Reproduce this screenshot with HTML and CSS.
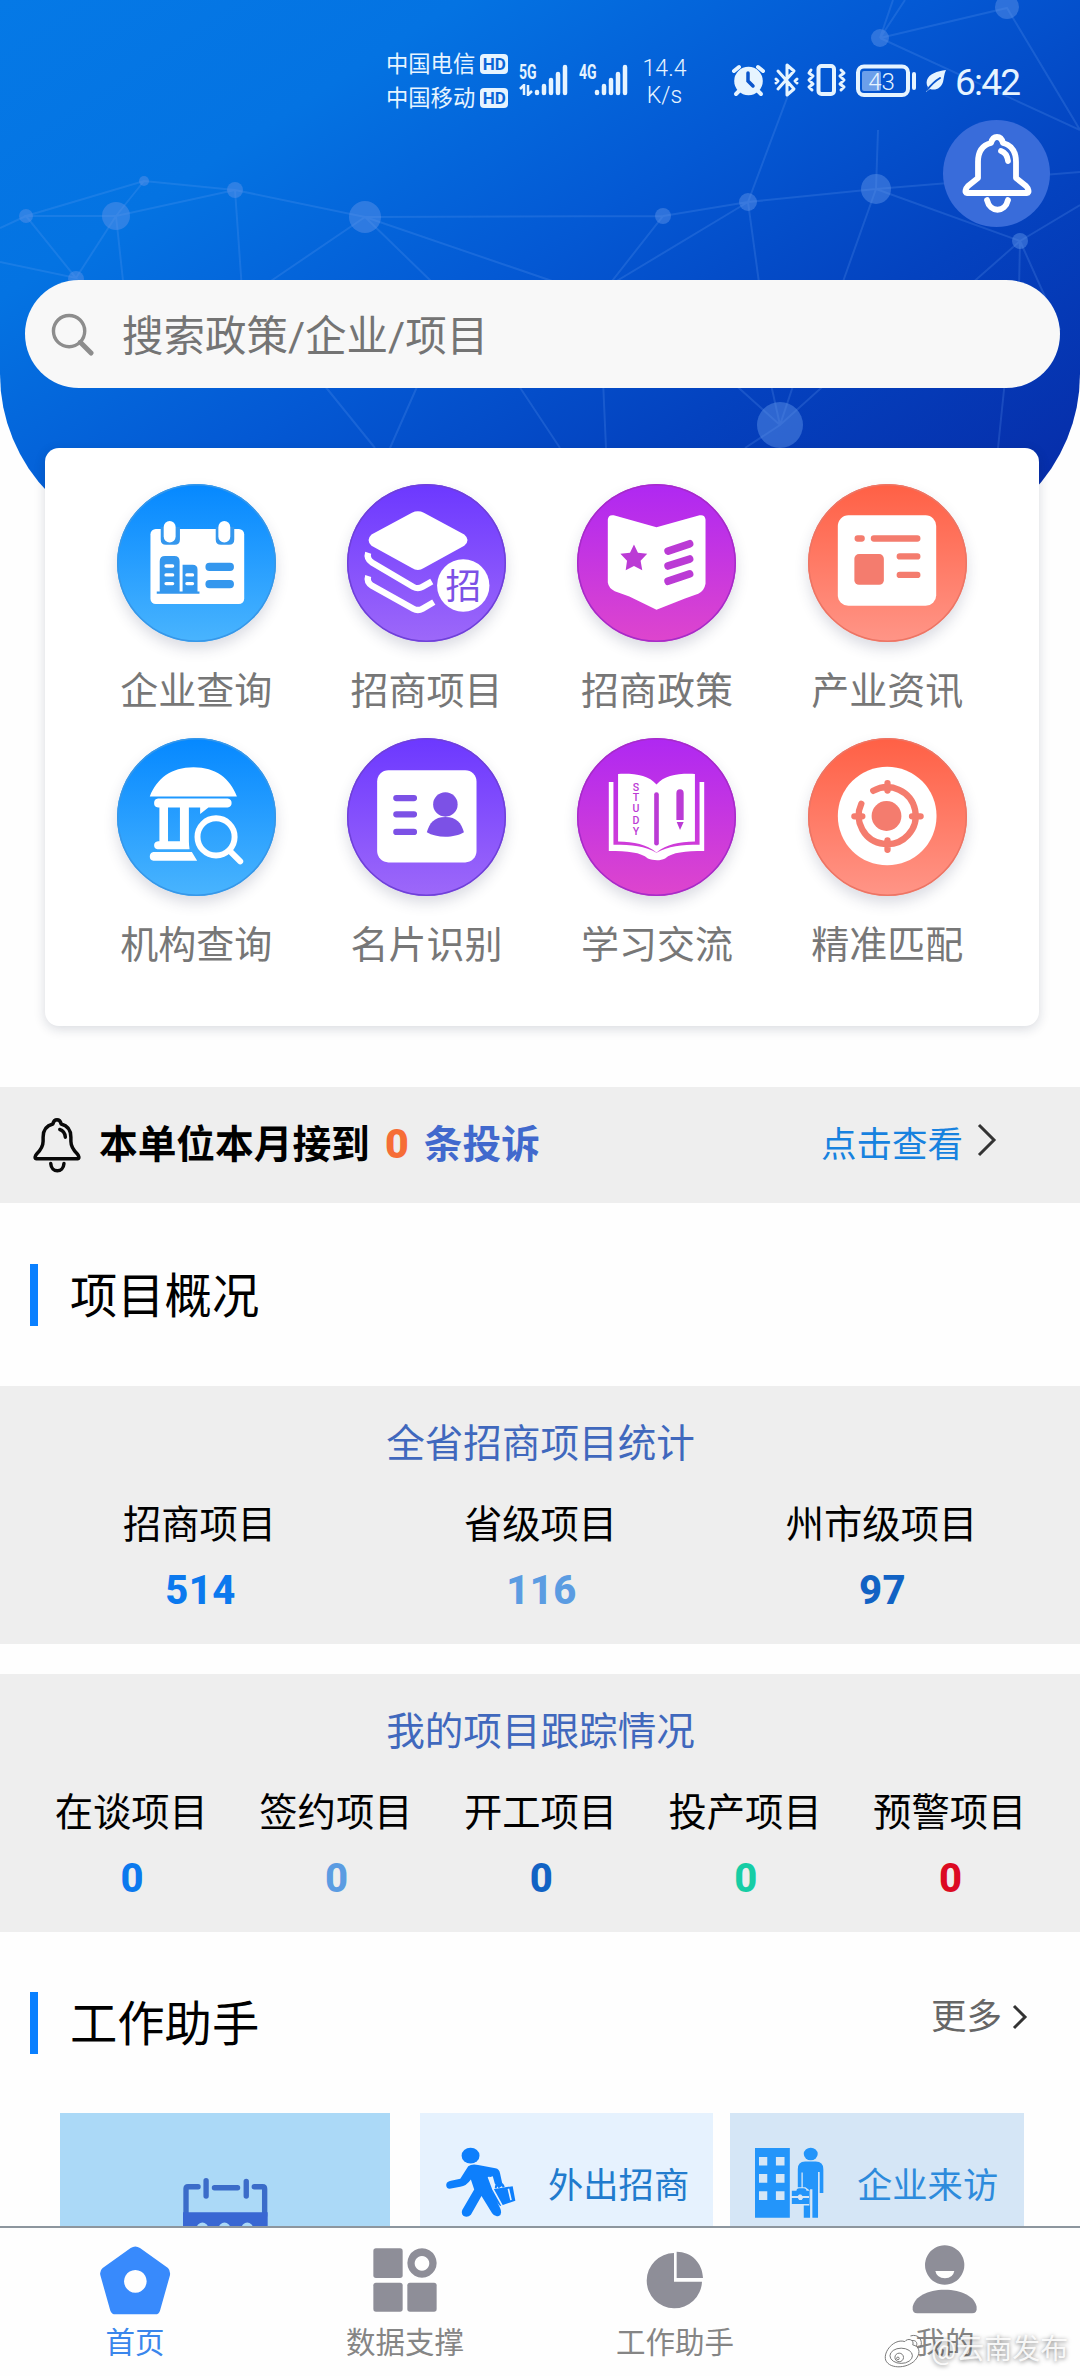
FILE: index.html
```html
<!DOCTYPE html>
<html lang="zh-CN">
<head>
<meta charset="utf-8">
<title>首页</title>
<link rel="stylesheet" href="styles.css">
</head>
<body>
<div class="app">
  <main class="content">
    <header class="hero">
      <svg class="mesh" viewBox="0 0 1080 540" aria-hidden="true">
        <g class="mesh-lines">
          <path d="M0 228 26 216 144 181 235 190 116 216 26 216 76 278 0 262M116 216 76 278M116 216 144 181M116 216 124 290M235 190 242 290M235 190 365 217 663 216 605 290M365 217 265 285M365 217 435 285M365 217 555 282M663 216 748 202 876 189 1080 172M748 202 610 285M748 202 760 290M748 202 790 90M876 189 840 290M876 189 1020 241 1080 205M876 189 878 130M1020 241 970 285M1020 241 1060 330M880 38 1007 8 1080 130M880 38 1080 130M880 38 905 0M880 38 893 0M1020 241 1019 290M320 380 375 448M420 380 390 448M515 380 560 448M603 380 606 448M730 380 780 425 830 380M780 425 770 380M780 425 795 380M780 425 745 448M1005 380 998 448"/>
        </g>
        <g class="mesh-dots">
          <circle cx="26" cy="216" r="7"/><circle cx="116" cy="216" r="14"/><circle cx="144" cy="181" r="5"/>
          <circle cx="235" cy="190" r="8"/><circle cx="365" cy="217" r="16"/><circle cx="76" cy="279" r="8"/>
          <circle cx="663" cy="216" r="8"/><circle cx="748" cy="202" r="9"/><circle cx="876" cy="189" r="15"/>
          <circle cx="880" cy="38" r="9"/><circle cx="1007" cy="7" r="12"/><circle cx="1020" cy="241" r="8"/>
          <circle cx="780" cy="425" r="23"/>
        </g>
      </svg>

      <div class="status">
        <div class="carriers">
          <div class="carrier">中国电信<span class="hd">HD</span></div>
          <div class="carrier">中国移动<span class="hd">HD</span></div>
        </div>
        <div class="signal">
          <span class="gen">5G</span>
          <svg class="updown" viewBox="0 0 14 12"><path d="M5 11V1L1 5M9 1v10l4-4"/></svg>
          <svg class="bars" viewBox="0 0 34 32"><path d="M3 28v1M10 22v7M17 16v13M24 10v19M31 3v26"/></svg>
        </div>
        <div class="signal signal-b">
          <span class="gen">4G</span>
          <svg class="bars" viewBox="0 0 34 32"><path d="M3 28v1M10 22v7M17 16v13M24 10v19M31 3v26"/></svg>
        </div>
        <div class="speed"><span>14.4</span><span>K/s</span></div>
        <svg class="tray" viewBox="730 60 220 40">
          <g class="fill">
            <circle cx="748.500" cy="81" r="14.300"/>
            <path d="M739 91l-3 3M758 91l3 3" class="line"/>
            <path d="M734 71l5-4M763 71l-5-4" class="line"/>
            <path d="M748 73v8l5 5" class="cut"/>
          </g>
          <path class="line thin" d="M778 71l16 18-7 6V65l7 6-16 18M776 79l2 2-2 2M797 79l-2 2 2 2"/>
          <rect class="line" x="818.500" y="66" width="15.500" height="28" rx="3"/>
          <path class="line thin" d="M811 70l-2 3 4 3-4 4 4 4-4 3 3 3M841 70l3 3-4 3 4 4-4 4 4 3-3 3"/>
          <rect class="charge" x="862" y="71" width="19" height="20" rx="2"/>
          <rect class="line" x="858" y="66.500" width="50" height="28.500" rx="6"/>
          <path class="line" d="M914 74v14"/>
          <text x="881.500" y="90" text-anchor="middle" class="battery">43</text>
          <path class="leaf" d="M946 70c-9 1-17 4-19 10-1 3 0 6 1 7l-2 5 4-3c6 2 11-1 13-7 1-4 1-8 3-12z"/>
          <path class="cut fine" d="M927 90c4-5 8-9 13-12"/>
        </svg>
        <span class="clock">6:42</span>
      </div>

      <button class="bell-btn" aria-label="消息">
        <svg class="bell" viewBox="960 133 72 82">
          <path d="M966 193H1026C1029 193 1027 188 1025 186L1015 178V162C1015 151 1010 145 1002 143 1001 139 999 137 996 137S991 139 990 143C982 145 977 151 977 162V178L967 186C965 188 963 193 966 193ZM986 200C989 213 1004 213 1007 200M1000 151Q1006 153 1007 161"/>
        </svg>
      </button>

      <div class="search">
        <svg class="search-icon" viewBox="0 0 44 44"><circle cx="18.500" cy="18.500" r="16"/><path d="M30 30l11 11" class="handle"/></svg>
        <span>搜索政策/企业/项目</span>
      </div>
    </header>

    <section class="menu">
      <a class="entry">
        <span class="badge blue"><svg viewBox="108 72 480 474">
          <rect class="w" x="209" y="206" width="283" height="227" rx="16"/>
          <path class="c" d="M240 200h58v38q0 16-16 16h-26q-16 0-16-16zM406 200h56v38q0 16-16 16h-24q-16 0-16-16z"/>
          <rect class="w" x="249" y="182" width="36" height="65" rx="18"/><rect class="w" x="414" y="182" width="36" height="65" rx="18"/>
          <path class="c" d="M237 396v-92q0-16 16-16h28q16 0 16 16v92zM306 396v-82h30q15 0 15 14v68zM228 395h129v7H228z"/>
          <rect class="c" x="375" y="308" width="86" height="25" rx="12"/><rect class="c" x="375" y="360" width="86" height="25" rx="12"/>
          <path class="ws" d="M256 318h20M256 345h20M256 371h20M319 345h17M319 371h17"/>
        </svg></span>
        <span class="label">企业查询</span>
      </a>
      <a class="entry">
        <span class="badge violet"><svg viewBox="800 72 480 474">
          <path class="w" d="M996 157q18-8 36 0l122 66q20 17 0 34l-122 67q-18 12-36 0l-122-67q-18-17 0-34z"/>
          <path class="wl" d="M864 278q-6 18 12 30l124 73q14 8 28 0l28-16M864 348q-6 18 12 30l124 69q14 8 28 0l34-20"/>
          <circle class="w" cx="1151" cy="377" r="79"/>
          <text class="zhao" x="1151" y="417" text-anchor="middle">招</text>
        </svg></span>
        <span class="label">招商项目</span>
      </a>
      <a class="entry">
        <span class="badge magenta"><svg viewBox="111 72 480 474">
          <path class="w" d="M204 178q2-16 18-13l129 36 130-36q16-3 18 13v194q-4 22-22 30l-40 14-86 34-82-40-44-16q-18-8-21-26z"/>
          <path class="c" d="M283 253l12 25 28 3-20 21 5 29-25-13-25 13 4-29-20-21 29-3z"/>
          <path class="cl bold" d="M386 273l65-22M386 318l65-21M386 364l65-22"/>
        </svg></span>
        <span class="label">招商政策</span>
      </a>
      <a class="entry">
        <span class="badge coral"><svg viewBox="803 72 480 474">
          <rect class="w" x="893" y="165" width="297" height="273" rx="32"/>
          <rect class="c" x="943" y="282" width="89" height="93" rx="14"/>
          <path class="cl" d="M953 235h12M1002 235h131M1080 289h53M1080 345h53"/>
        </svg></span>
        <span class="label">产业资讯</span>
      </a>
      <a class="entry">
        <span class="badge blue"><svg viewBox="108 53 480 474">
          <path class="w" d="M207 228c22-54 64-88 132-88s110 34 131 88zM232 234h210q12 2 12 14t-12 13H384l-25 20V261H325v102q0 8 2 24H230q-10-2-10-12t12-12h4V261h-4q-12 0-12-13t12-14zM262 261v102h36V261zM218 396h116l16 26H218q-11-2-11-13t11-13z" fill-rule="evenodd"/>
          <circle class="lens" cx="407" cy="350" r="56"/><path class="lens" d="M449 393l31 31"/>
        </svg></span>
        <span class="label">机构查询</span>
      </a>
      <a class="entry">
        <span class="badge violet"><svg viewBox="800 53 480 474">
          <rect class="w" x="891" y="149" width="300" height="278" rx="34"/>
          <path class="cl" d="M949 233h53M949 282h53M949 335h53"/>
          <circle class="c" cx="1097" cy="252" r="37"/>
          <path class="c" d="M1041 336c8-28 22-46 56-46s48 18 56 46c-28 18-84 18-112 0z"/>
        </svg></span>
        <span class="label">名片识别</span>
      </a>
      <a class="entry">
        <span class="badge magenta"><svg viewBox="111 53 480 474">
          <path class="w" d="M207 184h14v190c56 0 96 4 130 24 36-20 74-24 130-24V184h14v209c-58 0-96 4-118 22-16 8-36 6-52 0-22-18-60-22-118-22z"/>
          <path class="w" d="M235 160c52-2 92 4 116 32 24-28 64-34 116-32v204c-50 2-84 8-116 33-32-25-66-31-116-33z"/>
          <path class="cl spine" d="M351 222v147"/>
          <path class="c" d="M411 299v-81q0-12 11-12t11 12v81zM412 305h21l-11 24z"/>
          <g class="study" text-anchor="middle"><text x="289" y="212">S</text><text x="289" y="243">T</text><text x="289" y="276">U</text><text x="289" y="310">D</text><text x="289" y="344">Y</text></g>
        </svg></span>
        <span class="label">学习交流</span>
      </a>
      <a class="entry">
        <span class="badge coral"><svg viewBox="803 53 480 474">
          <circle class="w" cx="1042" cy="287" r="149"/>
          <circle class="c" cx="1040" cy="287" r="45"/>
          <path class="cl" d="M1000 211A86 86 0 1 1 964 250M1043 188v22M1043 361v28M943 288h24M1117 288h26"/>
        </svg></span>
        <span class="label">精准匹配</span>
      </a>
    </section>

    <section class="notice">
      <svg class="bell dark" viewBox="960 133 72 82">
        <path d="M966 193H1026C1029 193 1027 188 1025 186 1018 179 1016 174 1016 168V162C1016 151 1010 145 1002 143 1001 139 999 137 996 137S991 139 990 143C982 145 976 151 976 162V168C976 174 974 179 967 186 965 188 963 193 966 193ZM987 200C988 214 1005 214 1006 200M1000 151Q1007 153 1008 162"/>
      </svg>
      <p class="notice-text">本单位本月接到<b class="count">0</b><span class="complaint">条投诉</span></p>
      <a class="notice-link">点击查看</a>
      <svg class="chevron" viewBox="0 0 20 34"><path d="M2 2l15 15L2 32"/></svg>
    </section>

    <div class="section-head"><h2>项目概况</h2></div>

    <section class="stats">
      <h3>全省招商项目统计</h3>
      <dl class="figures three">
        <div><dt>招商项目</dt><dd class="n-blue">514</dd></div>
        <div><dt>省级项目</dt><dd class="n-sky">116</dd></div>
        <div><dt>州市级项目</dt><dd class="n-navy">97</dd></div>
      </dl>
    </section>

    <section class="stats">
      <h3>我的项目跟踪情况</h3>
      <dl class="figures five">
        <div><dt>在谈项目</dt><dd class="n-blue">0</dd></div>
        <div><dt>签约项目</dt><dd class="n-sky">0</dd></div>
        <div><dt>开工项目</dt><dd class="n-navy">0</dd></div>
        <div><dt>投产项目</dt><dd class="n-teal">0</dd></div>
        <div><dt>预警项目</dt><dd class="n-red">0</dd></div>
      </dl>
    </section>

    <div class="section-head work">
      <h2>工作助手</h2>
      <a class="more">更多<svg class="chevron small" viewBox="0 0 16 26"><path d="M2 2l11 11L2 24"/></svg></a>
    </div>

    <section class="tools">
      <div class="tool calendar">
        <svg viewBox="429 264 254 254" class="cal-icon">
          <path class="cal-line" d="M474 290h-30q-6 0-6 6v80M642 290h25q6 0 6 6v80M523 293h69"/>
          <path class="cal-line" d="M498 272v46M618 274v44"/>
          <path class="cal-fill" d="M429 366h253v130q0 22-22 22H451q-22 0-22-22z"/>
          <g class="cal-dots"><circle cx="487" cy="414" r="17"/><circle cx="553" cy="414" r="17"/><circle cx="621" cy="414" r="17"/></g>
        </svg>
      </div>
      <div class="tool out">
        <svg viewBox="1217 172 211 211" class="out-icon">
          <ellipse cx="1291" cy="198" rx="27" ry="24"/>
          <path d="M1284 230q10-8 30-4l52 10q12 2 14 16l8 36-12 8-12-14-6-22-12 4 10 24 2 22 22 46q8 18-4 24-12 4-20-8l-32-52-32 56q-10 10-22 4-8-6-4-18l36-62-10-30q-14 20-32 22l-32 6q-12-2-10-14 2-8 14-10l28-6z"/>
          <path d="M1354 300l64-10 8 44-46 16-18-22zM1364 296q0-16 14-16 12-2 16 12l-6 2q-4-8-10-6-8 0-8 8z"/>
          <path class="out-cut" d="M1345 262l14 38 28 50M1405 298l8 34"/>
        </svg>
        <span>外出招商</span>
      </div>
      <div class="tool visit">
        <svg viewBox="585 172 208 212" class="visit-icon">
          <path fill-rule="evenodd" d="M585 174h105v210H585zM597 201v26h25v-26zM648 201v26h26v-26zM597 252v27h25v-27zM648 252v27h26v-27zM597 304v27h25v-27zM648 304v27h26v-27z"/>
          <ellipse cx="753" cy="192" rx="21" ry="19"/>
          <path d="M714 292v-54q0-23 22-23h32q23 0 23 23v72h-11v-64h-5v138h-17v-86h-7v86h-19v-37h17v-46l-12-9h-8v-44h-4v44z"/>
          <path d="M696 303h14q0-8 8-8h14q8 0 8 8h8v16h-20l-4-5h-6l-4 5h-18zM696 325h18l4 6h8l4-6h18v18h-52z"/>
        </svg>
        <span>企业来访</span>
      </div>
    </section>
  </main>

  <nav class="tabs">
    <a class="tab active">
      <svg viewBox="180 470 210 208"><path fill-rule="evenodd" d="M272 476q14-9 28 0l84 60q8 8 6 22l-30 106q-3 11-14 11H226q-11 0-15-11L181 558q-3-14 7-22zM286 542a34 34 0 1 0 .1 0z"/></svg>
      <span>首页</span>
    </a>
    <a class="tab">
      <svg viewBox="991 470 210 208"><rect x="1001" y="477" width="88" height="89" rx="8"/><rect x="1001" y="580" width="88" height="87" rx="8"/><rect x="1103" y="580" width="88" height="87" rx="8"/><path fill-rule="evenodd" d="M1147 477a44 44 0 1 0 .1 0zM1147 500a22 22 0 1 1-.1 0z"/></svg>
      <span>数据支撑</span>
    </a>
    <a class="tab">
      <svg viewBox="241 470 210 208"><path d="M343 491v86h84a83 83 0 1 1-84-86zM351 487c44 0 78 34 79 79h-79z"/></svg>
      <span>工作助手</span>
    </a>
    <a class="tab">
      <svg viewBox="1051 470 210 208"><path fill-rule="evenodd" d="M1155 468a59 59 0 1 0 .1 0zM1127 545h57q-4 21-28 22-25-1-29-22z"/><path d="M1059 652c6-30 44-51 96-51s90 21 96 51q2 20-14 20h-164q-16 0-14-20z"/></svg>
      <span>我的</span>
    </a>
  </nav>

  <div class="watermark">
    <svg viewBox="975 720 115 104">
      <path class="wm-body" d="M1035 745c8-12 30-6 24 10 20 4 24 22 12 40-20 32-82 36-94 6-8-26 26-66 58-56z"/>
      <ellipse cx="1024" cy="788" rx="34" ry="23"/><circle cx="1018" cy="793" r="13"/><circle cx="1014" cy="796" r="4"/>
      <path d="M1052 728c24-8 40 14 30 34M1056 742c12-2 18 6 14 16"/>
    </svg>
    <span>@云南发布</span>
  </div>
</div>
</body>
</html>
```

FILE: styles.css
```css
* { box-sizing: border-box; margin: 0; padding: 0; }
svg { display: block; flex: none; }

body {
  width: 1080px;
  background: #fefefe;
  font-family: Roboto, "Noto Sans CJK SC", sans-serif;
  color: #000;
}

.app {
  position: relative;
  display: flex;
  flex-direction: column;
  height: 2376px;
  overflow: hidden;
}

.content { flex: 1; min-height: 0; overflow: hidden; }

/* Header */
.hero {
  position: relative;
  height: 544px;
  padding-top: 43px;
  border-radius: 0 0 170px 170px;
  overflow: hidden;
  background: linear-gradient(147deg, #0579e6 0%, #0473e2 24%, #0459d4 48%, #0442bf 70%, #0728a4 100%);
}
.mesh { position: absolute; left: 0; top: 0; width: 1080px; height: 540px; }
.mesh-lines { fill: none; stroke: #6fa4f5; stroke-opacity: .2; stroke-width: 2; }
.mesh-dots { fill: #5b93e8; fill-opacity: .48; }

.status {
  position: relative;
  display: flex;
  height: 77px;
  padding-left: 386px;
  color: #e6f4ff;
}
.carriers { width: 133px; padding-top: 4px; }
.carrier { display: flex; align-items: center; height: 34px; font-size: 22.300px; line-height: 34px; white-space: nowrap; }
.hd {
  width: 28px; height: 20px; margin-left: 5px;
  border-radius: 4px; background: #e6f4ff;
  color: #0964d6; font-size: 17px; font-weight: 700; line-height: 20px; text-align: center;
}
.signal { position: relative; width: 60px; height: 60px; }
.signal-b { width: 63px; }
.gen { position: absolute; left: 0; top: 20px; font-size: 20px; font-weight: 700; line-height: 18px; transform: scaleX(.7); transform-origin: 0 0; }
.updown { position: absolute; left: 0; top: 41px; width: 14px; height: 12px; fill: none; stroke: currentColor; stroke-width: 2.500; }
.bars { position: absolute; left: 15px; top: 21px; width: 34px; height: 32px; fill: none; stroke: currentColor; stroke-width: 4.500; stroke-linecap: round; }
.speed { display: flex; flex-direction: column; align-items: center; width: 45px; padding-top: 12px; font-size: 23px; font-weight: 300; line-height: 27px; }
.tray { width: 220px; height: 40px; margin: 17px 0 0 43px; fill: none; }
.tray .fill circle, .leaf { fill: #e6f4ff; }
.tray .line { fill: none; stroke: #e6f4ff; stroke-width: 4; stroke-linecap: round; stroke-linejoin: round; }
.tray .thin { stroke-width: 3; }
.tray .cut { fill: none; stroke: #0b55cc; stroke-width: 3.500; stroke-linecap: round; }
.tray .fine { stroke-width: 2; }
.charge { fill: #6c9fea; }
.battery { fill: #e6f4ff; font-size: 24px; font-weight: 300; }
.clock { margin: 20px 0 0 5px; font-size: 37px; line-height: 40px; letter-spacing: -1.800px; }

.bell-btn {
  position: relative;
  display: flex; align-items: center; justify-content: center;
  width: 107px; height: 107px; margin-left: 943px;
  border: 0; border-radius: 50%; background: #396cda;
}
.bell { width: 72px; height: 82px; fill: none; stroke: #fff; stroke-width: 5.800; stroke-linejoin: round; stroke-linecap: round; }

.search {
  position: relative;
  display: flex; align-items: center; gap: 28px;
  width: 1035px; height: 108px; margin: 53px 0 0 25px; padding-left: 26px;
  border-radius: 54px; background: #f8f8f8;
  color: #747474; font-size: 41.500px; line-height: 60px;
}
.search span { padding-top: 5px; }
.search-icon { width: 43px; height: 43px; fill: none; stroke: #8d8d8d; stroke-width: 3.500; }
.search-icon .handle { stroke-width: 5; stroke-linecap: round; }

/* Shortcut grid */
.menu {
  position: relative;
  display: grid;
  grid-template-columns: repeat(4, 230.400px);
  grid-auto-rows: 254px;
  width: 994px; height: 578px;
  margin: -96px 0 0 45px; padding: 36px 0 0 36px;
  border-radius: 14px; background: #fff;
  box-shadow: 0 3px 12px rgba(20, 30, 60, .16);
}
.entry { display: flex; flex-direction: column; align-items: center; gap: 21px; }
.label { color: #777; font-size: 38px; line-height: 56px; }
.badge { width: 159px; height: 158px; border-radius: 50%; box-shadow: 0 7px 14px rgba(40, 50, 90, .17), inset 0 0 0 1.500px var(--edge); background: linear-gradient(var(--from), var(--to)); }
.badge svg { width: 159px; height: 158px; }
.blue { --from: #0588ff; --to: #49b4fe; --mid: #3497ee; --edge: #3797e8; }
.violet { --from: #6c38ff; --to: #9d68f9; --mid: #7c51e6; --edge: #6f41d8; }
.magenta { --from: #af28f2; --to: #de45cd; --mid: #bb3bd5; --edge: #a62cc8; }
.coral { --from: #ff6045; --to: #ff9587; --mid: #f47c6e; --edge: #ec7565; }
.badge .w { fill: #fff; }
.badge .c { fill: var(--mid); }
.badge .cl { fill: none; stroke: var(--mid); stroke-width: 19; stroke-linecap: round; }
.badge .bold { stroke-width: 23; }
.badge .spine { stroke-width: 14; }
.badge .ws { stroke: #fff; stroke-width: 10; stroke-linecap: round; }
.badge .wl { fill: none; stroke: #fff; stroke-width: 19; }
.badge .lens { fill: none; stroke: #fff; stroke-width: 18; stroke-linecap: round; }
.zhao { fill: var(--mid); font-size: 108px; }
.study { fill: var(--mid); font-size: 32px; font-weight: 500; }

/* Complaint notice */
.notice {
  display: flex; align-items: center;
  height: 116px; margin-top: 61px; padding-left: 32px;
  background: #eee;
}
.bell.dark { width: 50px; height: 57px; stroke: #0a0a0a; stroke-width: 5; }
.notice-text { width: 722px; margin-left: 17px; padding-bottom: 1px; font-size: 38.700px; font-weight: 700; line-height: 56px; white-space: nowrap; }
.count { display: inline-block; width: 54px; color: #f66d36; font-size: 41px; text-align: center; }
.complaint { color: #4169cd; }
.notice-link { color: #1782df; font-size: 35.500px; line-height: 52px; }
.chevron { width: 20px; height: 34px; margin: -10px 0 0 14px; fill: none; stroke: #333; stroke-width: 3; }

/* Section titles */
.section-head { display: flex; align-items: center; height: 183px; padding: 0 52px 0 30px; }
h2 { height: 62px; padding: 3px 0 0 32px; border-left: 8px solid #0a80ff; font-size: 47.300px; font-weight: 400; line-height: 60px; }
.work { height: 181px; }
.more { display: flex; align-items: center; margin: -11px 0 0 auto; color: #666; font-size: 35.500px; line-height: 52px; }
.chevron.small { width: 16px; height: 26px; margin: 0 0 0 10px; }

/* Statistics */
.stats { height: 258px; padding: 29px 28px 0 29px; background: #eee; text-align: center; }
.stats + .stats { margin-top: 30px; }
h3 { color: #4068bd; font-size: 38.600px; font-weight: 400; line-height: 58px; }
.figures { display: grid; margin-top: 24px; }
.three { grid-template-columns: repeat(3, 1fr); }
.five { grid-template-columns: repeat(5, 1fr); }
dt { font-size: 38.300px; line-height: 56px; white-space: nowrap; }
dd { margin-top: 13px; padding-left: 2px; font-size: 40px; font-weight: 800; line-height: 50px; letter-spacing: .500px; }
.n-blue { color: #0b79ee; }
.n-sky { color: #5b9ce2; }
.n-navy { color: #1162c4; }
.n-teal { color: #16cda5; }
.n-red { color: #dc0a22; }

/* Work assistant */
.tools { display: flex; padding-left: 60px; }
.tool { display: flex; height: 220px; font-size: 35.300px; line-height: 52px; }
.calendar { width: 330px; padding: 65px 0 0 123px; background: #abd9f7; }
.cal-icon { width: 85px; height: 85px; }
.cal-line { fill: none; stroke: #3b6cc9; stroke-width: 16; stroke-linecap: round; }
.cal-fill { fill: #3967d3; }
.cal-dots { fill: #abd9f7; }
.out { width: 293px; margin-left: 30px; padding: 34px 0 0 26px; background: #e6f2fe; color: #217bcd; }
.out-icon { width: 70px; height: 70px; fill: #0d7ffc; }
.out-cut { fill: none; stroke: #e6f2fe; stroke-width: 5; }
.out span { margin: 13px 0 0 32px; }
.visit { width: 294px; margin-left: 17px; padding: 34px 0 0 25px; background: #d5e6f6; color: #2d8bdc; }
.visit-icon { width: 69px; height: 71px; fill: #2395fa; }
.visit span { margin: 13px 0 0 33px; }

/* Tab bar */
.tabs {
  display: grid; grid-template-columns: repeat(4, 1fr);
  height: 150px; padding-top: 18px;
  border-top: 2px solid #8d969e; background: #fefefe;
}
.tab { display: flex; flex-direction: column; align-items: center; gap: 6px; color: #858585; font-size: 29.500px; line-height: 44px; }
.tab svg { width: 70px; height: 69.300px; fill: #8e8e98; overflow: visible; }
.tab.active { color: #3a86ec; }
.tab.active svg { fill: #388afc; }

.watermark {
  position: absolute; left: 885px; top: 2329px;
  display: flex; align-items: center;
  color: rgba(255, 255, 255, .9); font-size: 28px; line-height: 42px;
  text-shadow: 0 1px 4px rgba(0, 0, 0, .5);
}
.watermark svg { width: 38px; height: 35px; margin-right: 8px; fill: none; stroke: #777; stroke-width: 3; overflow: visible; }
.wm-body { fill: rgba(255, 255, 255, .75); }
```
